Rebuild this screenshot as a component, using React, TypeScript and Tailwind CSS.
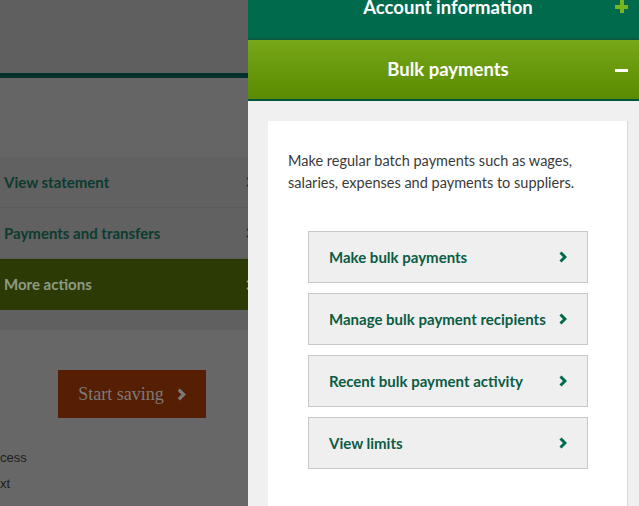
import React from 'react';

const font = { fontFamily: 'Lato, "Open Sans", sans-serif' };

const Chevron: React.FC<{ className?: string }> = ({ className }) => (
  <svg viewBox="0 0 8 12" className={className} fill="none">
    <path d="M1.5 1.5 L6 6 L1.5 10.5" stroke="currentColor" strokeWidth="3" strokeLinejoin="miter" />
  </svg>
);

const leftRows = [
  { label: 'View statement', active: false },
  { label: 'Payments and transfers', active: false },
  { label: 'More actions', active: true },
];

const bulkLinks = [
  'Make bulk payments',
  'Manage bulk payment recipients',
  'Recent bulk payment activity',
  'View limits',
];

const App: React.FC = () => {
  return (
    <div className="flex w-[639px] h-[506px] overflow-hidden" style={font}>
      {/* page behind the overlay */}
      <div className="w-[248px] shrink-0 flex flex-col bg-[#676767] overflow-hidden">
        <div className="h-[73px] bg-[#5f5f5f]" />
        <div className="h-[5px] bg-[#00302a]" />
        <div className="h-[79px] bg-[#656565]" />
        {leftRows.map((row) => (
          <div
            key={row.label}
            className={`h-[51px] flex items-center justify-between pl-1 pr-0 border-b border-[#5a5a5a] ${
              row.active ? 'bg-[#2c3a05] text-[#8e9a82] border-b-0 h-[50px]' : 'bg-[#616161] text-[#0c3b2f]'
            }`}
          >
            <span className="text-[15px] font-bold">{row.label}</span>
            <Chevron className={`w-[8px] h-[12px] -mr-[6px] ${row.active ? 'text-[#8e9a82]' : 'text-[#0c3b2f]'}`} />
          </div>
        ))}
        <div className="h-[20px] bg-[#606060]" />
        <div className="pt-[40px] pl-[58px]">
          <div className="w-[148px] h-[48px] bg-[#561e02] flex items-center justify-center gap-[13px] text-[#7a7a7a]">
            <span className="text-[18px]" style={{ fontFamily: '"Liberation Serif", serif' }}>
              Start saving
            </span>
            <Chevron className="w-[9px] h-[13px]" />
          </div>
        </div>
        <div
          className="mt-[27px] text-[13px] leading-[26px] text-[#1c1c1c]"
          style={{ fontFamily: '"Liberation Sans", Arial, sans-serif' }}
        >
          <div>cess</div>
          <div>xt</div>
        </div>
      </div>

      {/* side panel */}
      <div className="flex-1 flex flex-col bg-[#f0f0f0]">
        <div className="-mt-[22px] h-[62px] shrink-0 relative flex items-center justify-center pl-[9px] bg-[#006a4d] border-b-2 border-[#0b5c41]">
          <span className="text-white font-bold text-[18.5px]">Account information</span>
          <span className="absolute right-[11px] top-[22px] w-[13px] h-[13px]">
            <span className="absolute left-0 top-[4.5px] w-[13px] h-[4px] bg-[#7ab51d]" />
            <span className="absolute top-0 left-[4.5px] w-[4px] h-[13px] bg-[#7ab51d]" />
          </span>
        </div>
        <div className="h-[61px] shrink-0 relative flex items-center justify-center pl-[9px] bg-gradient-to-b from-[#77a818] to-[#5a8a00] border-b-2 border-[#00573b]">
          <span className="text-white font-bold text-[18.5px]">Bulk payments</span>
          <span className="absolute right-[11px] top-[29px] w-[13px] h-[3px] bg-white" />
        </div>
        <div className="flex-1 pt-5 pl-5 pr-[11px]">
          <div className="h-full bg-white border-r border-[#d8d8d8] pt-[29px] px-5">
            <p className="text-[14.5px] leading-[22px] text-[#3a3a3a]">
              Make regular batch payments such as wages, salaries, expenses and payments to suppliers.
            </p>
            <div className="mt-[37px] flex flex-col gap-[10px] pl-5">
              {bulkLinks.map((label) => (
                <div
                  key={label}
                  className="w-[280px] h-[52px] flex items-center justify-between px-5 bg-[#efefef] border border-[#c8c8c8] text-[#0a5c44]"
                >
                  <span className="text-[15px] font-bold">{label}</span>
                  <Chevron className="w-[8px] h-[12px] text-[#006a4d]" />
                </div>
              ))}
            </div>
          </div>
        </div>
      </div>
    </div>
  );
};

export default App;
